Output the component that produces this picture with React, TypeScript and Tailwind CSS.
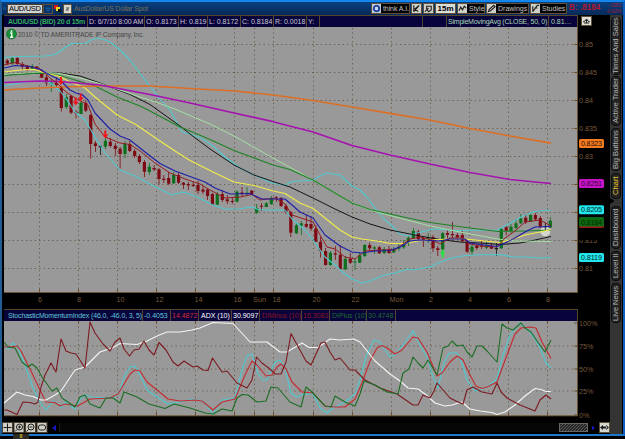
import clsx from "clsx";

type Candle = [x: number, high: number, low: number, top: number, bottom: number, color: "r" | "g" | "k"];

const CANDLE_COLORS = { r: "#7d0a12", g: "#0d6e1c", k: "#151515" };

const candles: Candle[] = [
  [7.3, 59, 65, 60.5, 63.5, "r"],
  [12.3, 57, 65, 58, 63.3, "g"],
  [17.3, 57, 65, 58, 64, "r"],
  [22.3, 62, 70, 64, 66.5, "r"],
  [27.3, 65, 71, 66, 69, "r"],
  [32.2, 64, 69, 66, 68.5, "g"],
  [36.8, 66, 70, 66.5, 69, "r"],
  [41.7, 69, 78, 70.7, 77.7, "r"],
  [46.4, 75, 86, 77.3, 83.3, "r"],
  [51.3, 79, 92, 82.8, 84, "g"],
  [56.3, 77, 87, 82.7, 85, "r"],
  [61.3, 86, 111.5, 87, 108, "r"],
  [66.3, 94, 109, 97, 107, "g"],
  [71.1, 95, 114, 96, 112.7, "r"],
  [76, 110, 118.5, 111.7, 113.3, "r"],
  [81, 102, 114, 102.7, 114, "g"],
  [85.8, 100, 112, 102.7, 110.7, "r"],
  [90.7, 114, 158.5, 115, 144, "r"],
  [95.4, 141, 152, 143.3, 146, "r"],
  [100.4, 145, 155, 145.7, 147.3, "k"],
  [105.4, 138, 149, 140.7, 146.7, "g"],
  [110.3, 138, 147.5, 141.7, 146, "r"],
  [115.3, 143, 156, 145.7, 149, "r"],
  [120.1, 147, 168.5, 148.7, 154, "r"],
  [125, 141, 158, 144, 154, "g"],
  [129.8, 141, 152, 144, 151, "r"],
  [134.7, 149, 158, 151, 156, "r"],
  [139.4, 154, 164, 156, 162, "r"],
  [144.4, 160, 177, 162, 171.7, "r"],
  [149.3, 163, 175, 166.7, 172, "g"],
  [154.1, 165, 171, 168, 169.5, "r"],
  [159, 168, 184.5, 169.3, 179, "r"],
  [163.8, 175, 183, 178.7, 180, "r"],
  [168.7, 172, 185, 178, 183.7, "r"],
  [173.7, 172, 184, 175, 183.3, "g"],
  [178.6, 173, 184, 175, 182.7, "r"],
  [183.4, 182, 189, 182.7, 184.7, "r"],
  [188.3, 182, 190, 184, 185.3, "r"],
  [193.2, 182, 187, 184.7, 186, "r"],
  [198, 181, 194, 185, 191, "r"],
  [203, 186, 194, 189.5, 191.7, "r"],
  [207.6, 188, 200, 189.5, 196, "r"],
  [212.4, 193, 205, 194, 204.7, "r"],
  [217.3, 192, 205, 194, 204.7, "g"],
  [222.3, 190, 202, 194, 200, "r"],
  [227.3, 195, 204, 199.3, 201.3, "r"],
  [232.3, 197, 204, 201, 202, "r"],
  [237, 190, 202.5, 191.7, 201.7, "g"],
  [242, 187, 196, 192.5, 194, "r"],
  [247, 187, 196, 192.7, 194, "g"],
  [251.7, 190, 195, 190.7, 194, "r"],
  [256.7, 204, 214, 208, 212.7, "g"],
  [261.4, 203, 211, 205.7, 206.7, "r"],
  [266.3, 202, 207, 203.3, 207, "g"],
  [271.3, 196, 205, 198, 204, "g"],
  [276.3, 196, 202, 197.3, 198.3, "r"],
  [281.1, 197, 207, 198, 206, "r"],
  [286, 204, 214, 206, 211.7, "r"],
  [290.8, 211, 237, 212, 232.7, "r"],
  [296.4, 223, 234, 225.3, 233.3, "g"],
  [301.3, 221, 235, 223.3, 225.7, "g"],
  [306.3, 215, 228, 224, 226.7, "r"],
  [311, 216, 231, 224, 228.7, "r"],
  [315.8, 225, 242, 228.7, 241.7, "r"],
  [320.5, 237, 257.5, 241.7, 251, "r"],
  [325.6, 248, 265.5, 251, 265, "r"],
  [330.4, 251, 266, 252.7, 265, "g"],
  [335.3, 246, 260, 253.3, 254.7, "r"],
  [340.3, 245, 270, 254.7, 269.3, "r"],
  [345.3, 256, 270, 258.7, 269.3, "g"],
  [350.3, 253, 264, 258.7, 262.7, "r"],
  [355, 258, 270, 261.5, 262.5, "g"],
  [359.7, 252, 263, 255.3, 262.7, "g"],
  [364.7, 244, 257, 245, 256, "g"],
  [369.7, 242.5, 251, 245, 248.3, "r"],
  [374.4, 246, 254, 247.3, 248.7, "g"],
  [379.3, 246, 254, 247.3, 253.3, "r"],
  [384.2, 247, 254, 249, 253, "g"],
  [389, 246, 254, 249, 253, "r"],
  [393.8, 247, 253, 249, 252.5, "g"],
  [398.8, 244, 251, 246.7, 248.7, "g"],
  [403.7, 240, 249, 243.3, 247.3, "g"],
  [408.4, 236, 246, 237.7, 243.3, "g"],
  [413.4, 228, 239, 231, 238.3, "g"],
  [418.3, 230, 241, 231.7, 239, "r"],
  [423.3, 237, 247, 238, 240, "r"],
  [428.2, 233, 243, 237.3, 238.7, "g"],
  [433, 235, 252, 237, 248.3, "r"],
  [437.8, 246, 256, 248.3, 250, "r"],
  [442.7, 232, 252, 233.3, 249.3, "g"],
  [447.5, 230, 240, 233, 234.7, "r"],
  [452.4, 222, 241, 234, 235.3, "r"],
  [457.3, 233, 240, 235, 237.3, "r"],
  [462.3, 231, 243, 235, 241, "r"],
  [467.1, 240, 253, 241.7, 251.7, "r"],
  [472, 245, 255, 246.7, 251.7, "g"],
  [476.8, 244, 250, 246, 248, "r"],
  [481.7, 240, 249, 245.3, 246.7, "r"],
  [486.6, 241, 249, 245, 247.7, "g"],
  [491.4, 243, 249, 246, 248.7, "r"],
  [496.4, 243, 256, 248, 249.3, "k"],
  [501.3, 228, 249, 229, 248.3, "g"],
  [506.2, 226, 235, 227.3, 230.7, "r"],
  [511, 224, 233, 226.7, 231, "g"],
  [516, 219, 229, 223.3, 228, "g"],
  [520.8, 214, 224, 218.3, 223.3, "g"],
  [525.7, 214, 224, 217.7, 222.3, "r"],
  [530.6, 214, 222, 215, 221.7, "g"],
  [535.4, 213, 221, 215, 219.3, "r"],
  [540.3, 216, 228, 218, 226.7, "r"],
  [545.3, 223, 231, 226, 227.3, "k"],
  [550.3, 217, 228, 220.7, 227.3, "g"],
];

const priceLines = [
  {
    color: "#4fc9cf",
    width: 1.1,
    points:
      "4,57.5 10,56.8 45,56 55,54.5 62,50 65,47.5 72,43.5 86,43.2 91,40 97,38 104,39.5 110,42 118,48 130,60 145,80 160,99 170,110 182,132 190,134 201,138 213,146 225,157 240,168 254,175 273,183.5 285,185 292,181.5 313,180 320,176 327,173 340,175 352,186 360,190 366,196 375,208 383,218 390,224 400,234 408,236 417,233 433,229 457,230.5 497,230 503,227 513,221.5 523,216 533,212 542,210.5 551,210.3",
  },
  {
    color: "#4fc9cf",
    width: 1.1,
    points:
      "4,85.5 15,84 25,82 40,81 50,82.5 60,91 67,100 75,112 85,120 95,137 105,153 113,162 120,170 135,176 150,184 162,190 172,195 183,192 195,196 213,205 225,209 240,208.7 252,207 258,209.5 268,210 285,210 292,219 305,230 313,240 325,257 335,265 345,274 352,279 362,283 370,281 383,275.5 395,273 408,269 413,270 430,267 440,262 452,258 465,255.5 480,254.7 500,254.5 512,257 525,257 540,258 551,257.5",
  },
  {
    color: "#151515",
    width: 1,
    points:
      "4,75 30,73.5 60,73 80,76 100,83 130,94.5 150,104.5 180,126 190,134 210,149 234,165 254,175 273,181.5 290,187 313,198 335,209 352,217 370,224 390,230 400,232 420,236 440,239.5 460,242 480,243 500,244.5 520,243 535,240 551,236.5",
  },
  {
    color: "#a3e0a3",
    width: 1,
    points:
      "4,74.5 40,72.5 60,73.5 80,78 98,83 117,89 140,97 157,102.5 175,109 190,115.5 210,124 234,136 273,158 313,180 335,193 352,203 370,210 390,215.5 430,226 470,234 498,239 515,241 551,241.5",
  },
  {
    color: "#1d8424",
    width: 1.1,
    points:
      "4,75.5 40,73 60,75.5 75,80 95,86 117,97 140,106 150,111 180,127 190,131 210,139.5 234,150.5 273,165 290,169.5 313,180 335,193 352,203 370,209.5 390,214 410,218.5 430,222.5 470,228 498,231.5 525,231 551,230",
  },
  {
    color: "#f2ec4a",
    width: 1.1,
    points:
      "4,72 20,70 35,69.5 45,73 60,76.5 70,82 85,88 95,97 117,115 135,124 157,139 175,151 190,160.5 213,172 234,182 254,185.5 273,191 285,193.5 300,203 313,208.5 330,222 340,230 352,237 362,239 380,241.5 390,243.5 405,243.5 420,240.5 440,239.5 460,238.5 480,240.5 500,242.5 510,240 525,235 540,232 551,229.5",
  },
  {
    color: "#dd6f25",
    width: 1.7,
    points:
      "4,90 30,88.5 60,87 100,86 150,86 190,88.5 235,91 273,95 313,100.5 352,107 390,113.3 430,120 470,128.5 510,136 551,143.2",
  },
  {
    color: "#a612b0",
    width: 1.7,
    points:
      "4,82.5 40,81 60,81.5 100,85 150,94.5 190,103 234,113 273,121.7 313,132 352,145.5 390,155 430,164 470,172.5 510,179.5 535,182 551,183.5",
  },
  {
    color: "#951d22",
    width: 1,
    points:
      "4,65 15,62.5 30,66.5 40,69 50,78 58,84 66,92 75,98 88,105 95,124 105,137 120,143 130,144.5 140,151 155,163 170,173 185,179 200,184 210,190 225,198 240,197 252,194.5 260,200 275,198 285,204 292,215 313,222 320,235 327,247 335,249 345,257 355,259 365,251 380,250 395,250 410,239 420,237 432,240 440,244 450,238 462,238 470,244 480,246 497,247 505,238 515,231 525,222 540,220 551,226",
  },
  {
    color: "#1e1ea8",
    width: 1.1,
    points:
      "4,68 15,65.5 30,66.5 40,69.5 50,75 60,80 70,90 76,93 82,94.5 88,100 95,113 110,129 120,136 130,140 145,152 160,163.5 175,171 190,176.5 205,182 215,188 230,194 250,193.5 262,199 285,199 292,205 300,212 313,218 325,235 340,246 352,252 362,253 375,251 390,250.5 400,247 410,241 420,240 440,241 450,239 465,239 470,243 480,244.5 497,246.5 505,243 515,238 525,232 535,227 551,226.5",
  },
];

const studyLines = [
  {
    color: "#4fc9cf",
    points:
      "4,347 9,349 13,343 18,348 25,365 33,388 40,402 46,410 53,401 57,403 61,408 65,402 75,409 80,399 85,395 92,397 108,398 115,397 120,390 125,375 130,367 135,366 140,375 147,390 160,399 168,404 180,402 192,399 203,401 213,414 222,400 235,398 242,370 247,356 252,354 258,374 263,380 267,380 275,362 280,360 285,368 291,393 297,397 304,394 313,394 320,408 327,413 333,408 345,402 355,394 360,380 366,356 374,340 380,342 385,350 390,357 395,355 405,342 413,331 420,345 428,359 433,377 438,388 444,363 449,353 457,353 462,363 467,380 475,391 480,390 487,387 497,379 503,355 510,335 520,323 528,330 535,339 541,350 546,363 551,368",
  },
  {
    color: "#c42a30",
    points:
      "4,347 10,347 17,346 21,351 31,371 41,392 46,402 55,402.5 60,406 65,404 77,406 83,403 90,399 110,398 118,394 124,384 130,374 135,370 140,371 147,382 157,390 168,399 180,401 195,400 202,401 213,410 222,402 235,399 245,375 252,361 257,365 266,376 272,375 277,367 281,364 286,369 292,382 302,392 313,393 325,406 335,407 345,407 355,399 362,383 370,361 377,348 382,345.5 387,348 395,354 402,350 413,337 418,338 427,352 437,376 442,373 450,362 457,356 463,360 470,375 476,386 482,388.5 487,387 497,382 507,355 515,334 521,328 530,327 536,328 542,342 551,358.5",
  },
  {
    color: "#f4f4f4",
    points:
      "4,403 17,392 25,395 33,396.5 41,400 46,400 55,395 61,391 75,370 85,367 92,360 100,352 112,348 120,343.5 137,344.5 147,341 157,336 167,332 180,332 192,330 200,328 213,322.5 233,323.5 250,342 267,342 280,352 287,352 302,343 309,347.5 318,347.5 330,339 340,340 354,339 360,342 375,361 390,374 400,381 408,388 418,389 425,394 435,403 445,406 452,405 462,402 470,409 480,411 492,412.5 497,414.5 505,412 515,405 525,396 535,388.5 541,389.5 546,391.5 551,391.5",
  },
  {
    color: "#7d1a20",
    points:
      "4,410 7,410 17,414.5 23,402 30,402.5 35,404 38,402 41,387 45,375 51,363 56,372 61,339 66,351 71,353 76,354 85,368 90,322 95,333 103,344 110,351 115,342 120,338 124,349 129.5,356 134,350 139,349 144,341 149,350 154,355 159,342.5 166,350 173,362 178,366 184,361 193,367 197,366 203,370 208,370.5 212.5,358 222,372 227,371 237,383 247,388 252,380 256.5,357 262,363 270,369 275,374 281,374 286,362 291,333.5 295,341 306,361 311,365 321,343 325,342 330,352 335,360 340,358 350,370 355,370 365,380 380,388 397,394 413,405 418,405 423,395 430,398 434,391 437,383 450,398 456,401 463,404 467,390 473,387 482,392 492,394 497,383 501,392 507,398 520,405 535,411 540,400 546,395 551,399",
  },
  {
    color: "#1b6e24",
    points:
      "4,342 8,347 15,348 22,362 28,367 32,364 37,368 42,377 52,391 57,388 62,398 75,407 80,397 85,395 90,404 100,408 106,398 113,398 120,403 124,392 137,397 149,404 165,408.5 174,404 190,408 205,413 213,414 222,409 232,411 237,398 242,394.5 248,395 257,402 266,401 271,387 278,388 290,402 301,407 306,387 311,391 325,406 331,407 335,396 345,402 355,406 360,394 364,381 375,385 387,392 398,394 403,373 409,369 413,357 418,363 423,368 428,360 437,375 443,348 448,346 452,341 457,346 463,345 467,352 472,357 477,346 482,346 487,351 497,362 502,324 507,328 513,330 521,323 525,328 531,332 537,341 545,352 551,340",
  },
];

const timeTicks = [
  { x: 39.5, label: "6" },
  { x: 78.5, label: "8" },
  { x: 117.5, label: "10" },
  { x: 156.5, label: "12" },
  { x: 195.5, label: "14" },
  { x: 234.5, label: "16" },
  { x: 254.5, label: "Sun" },
  { x: 273.5, label: "18" },
  { x: 313.5, label: "20" },
  { x: 352.5, label: "22" },
  { x: 391.5, label: "Mon" },
  { x: 430.5, label: "2" },
  { x: 469.5, label: "4" },
  { x: 508.5, label: "6" },
  { x: 547.5, label: "8" },
];

const priceTicks = [
  { y: 44.5, label: "0.85" },
  { y: 72.5, label: "0.845" },
  { y: 100.5, label: "0.84" },
  { y: 128.5, label: "0.835" },
  { y: 156.5, label: "0.83" },
  { y: 184.5, label: "" },
  { y: 212.5, label: "" },
  { y: 240.5, label: "0.815" },
  { y: 268.5, label: "0.81" },
];

const priceTags = [
  { y: 143.5, label: "0.8323", fill: "#f47b20", text: "#2a1000" },
  { y: 183.5, label: "0.8251", fill: "#c814c8", text: "#3a003a" },
  { y: 209.8, label: "0.8205", fill: "#22e6ea", text: "#00282c" },
  { y: 257.5, label: "0.8119", fill: "#22e6ea", text: "#00282c" },
];

const percentTicks = [
  { y: 323.5, label: "100%" },
  { y: 346.5, label: "75%" },
  { y: 369.5, label: "50%" },
  { y: 391.5, label: "25%" },
  { y: 415.5, label: "0%" },
];

const quoteCells = [
  { text: "AUD/USD (BID) 20 d 15m", className: "w-[84px] pl-1 font-bold text-[#2fae5c] tracking-[-0.25px]" },
  { text: "D: 6/7/10 8:00 AM", className: "w-[57px] pl-px tracking-[-0.1px]" },
  { text: "O: 0.8173", className: "w-[34px] pl-px" },
  { text: "H: 0.819", className: "w-[29px] pl-px" },
  { text: "L: 0.8172", className: "w-[33px] pl-px" },
  { text: "C: 0.8184", className: "w-[33px] pl-px" },
  { text: "R: 0.0018", className: "w-[33px] pl-px" },
  { text: "Y:", className: "w-[13px] pl-px" },
  { text: "", className: "w-[103px]" },
  { text: "", className: "w-[24px]" },
  { text: "SimpleMovingAvg (CLOSE, 50, 0)", className: "w-[102px] pl-px text-[#a9d8b4] tracking-[-0.22px]" },
  { text: "0.81…", className: "w-[28px] pl-0.5 text-[#a9d8b4]" },
];

const studyCells = [
  { text: "StochasticMomentumIndex (46.0, -46.0, 3, 5)", className: "w-[139px] pl-1 text-[#62c8dc] tracking-[-0.14px]" },
  { text: "-0.4053", className: "w-[28px] pl-px text-[#62c8dc]" },
  { text: "14.4872", className: "w-[28px] pl-px text-[#d02a30]" },
  { text: "ADX (10)", className: "w-[33px] pl-0.5 text-white" },
  { text: "30.9097", className: "w-[28px] pl-px text-white" },
  { text: "DIMinus (10)", className: "w-[42px] pl-0.5 text-[#8a1426] tracking-[-0.1px]" },
  { text: "16.3083", className: "w-[28px] pl-px text-[#8a1426]" },
  { text: "DIPlus (10)", className: "w-[37px] pl-0.5 text-[#1d6b30]" },
  { text: "30.4748", className: "w-[29px] pl-px text-[#1d6b30]" },
];

const sideTabs = [
  { label: "Times And Sales", className: "h-[58px]" },
  { label: "Active Trader", className: "mt-px h-[50px]" },
  { label: "Big Buttons", className: "mt-0.5 h-[43px]" },
  { label: "Chart", className: "mt-0.5 h-[26px] text-[#e6c92c]" },
  { label: "Dashboard", className: "mt-[7px] h-[43px]" },
  { label: "Level II", className: "mt-[2px] h-[30px]" },
  { label: "Live News", className: "mt-[2px] h-[40px]" },
];

function Line({ color, points, width = 1.1 }: { color: string; points: string; width?: number }) {
  return <polyline points={points} fill="none" stroke={color} strokeWidth={width} strokeLinejoin="round" />;
}

function AxisText({ x, y, label, anchor = "start" }: { x: number; y: number; label: string; anchor?: "start" | "middle" }) {
  return (
    <text x={x} y={y} textAnchor={anchor} fill="#77583c" fontSize="7.2">
      {label}
    </text>
  );
}

function Arrow({ x, y, up = false }: { x: number; y: number; up?: boolean }) {
  const d = up ? "M0 -4 L2.5 0 H1 V4 H-1 V0 H-2.5 Z" : "M0 4 L3 0 H1 V-4 H-1 V0 H-3 Z";
  return <path d={d} transform={`translate(${x} ${y})`} fill={up ? "#22e83a" : "#f4141c"} />;
}

function PriceChart() {
  return (
    <svg viewBox="4 27 606 282" className="block h-[282px] w-[606px] shrink-0">
      <rect x="4" y="27" width="574" height="266" fill="#999999" />
      <g stroke="#685c48" strokeWidth="1" strokeDasharray="1.2 3.2">
        {priceTicks.map(({ y }) => (
          <line key={y} x1="4" x2="577" y1={y} y2={y} />
        ))}
        {timeTicks.map(({ x }) => (
          <line key={x} x1={x} x2={x} y1="28" y2="293" />
        ))}
      </g>
      <g stroke="#6b5030">
        <path d="M577.5 27 V293 M4 292.5 H578" />
        {priceTicks.map(({ y }) => (
          <line key={y} x1="574" x2="577" y1={y} y2={y} />
        ))}
        {timeTicks.map(({ x }) => (
          <line key={x} x1={x} x2={x} y1="289" y2="293" />
        ))}
      </g>

      <circle cx="545.3" cy="231.5" r="5" fill="#d4d4cc" />
      {candles.map(([x, high, low, top, bottom, color]) => (
        <g key={x} fill={CANDLE_COLORS[color]}>
          <rect x={x - 0.4} y={high} width="0.8" height={low - high} />
          <rect x={x - 1.6} y={top} width="3.2" height={bottom - top} />
        </g>
      ))}
      {priceLines.map((line, i) => (
        <Line key={i} {...line} />
      ))}
      <Arrow x={61} y={81} />
      <Arrow x={75.7} y={101.5} />
      <Arrow x={80.7} y={97.5} />
      <Arrow x={105.3} y={134.5} />
      <Arrow x={442.7} y={253.5} up />

      {/* copyright badge */}
      <circle cx="11.5" cy="34" r="5" fill="#16913a" stroke="#0b5a20" strokeWidth="0.6" />
      <path d="M11.5 30.3 v1.6 M10.2 33 h1.5 v4 M10 37.2 h3.2" stroke="#f2fff2" strokeWidth="1.4" fill="none" />
      <text x="18" y="36.8" fontSize="6.8" fill="#484848" textLength="126">
        2010 © TD AMERITRADE IP Company, Inc.
      </text>

      {timeTicks.map(({ x, label }) => (
        <AxisText key={x} x={x + (label.length === 3 ? 5 : label.length === 2 ? 3 : 0.5)} y={302} label={label} anchor="middle" />
      ))}
      {priceTicks.map(({ y, label }) => (
        <AxisText key={y} x={579} y={y + 2.7} label={label} />
      ))}
      {priceTags.map(({ y, label, fill, text }) => (
        <g key={label}>
          <rect x="579" y={y - 4.5} width="25" height="9" rx="1.5" fill={fill} />
          <text x="581" y={y + 2.6} fontSize="7.2" fill={text} textLength="21">
            {label}
          </text>
        </g>
      ))}
      <rect x="579" y="220" width="25" height="8" rx="1.5" fill="#a01818" />
      <rect x="579" y="217" width="25" height="9.6" rx="1.5" fill="#0c6a10" />
      <text x="581" y="224.5" fontSize="7.2" fill="#022c04" textLength="21">
        0.8184
      </text>
      <rect x="579" y="236" width="30" height="4" fill="#000" />
    </svg>
  );
}

function StudyChart() {
  return (
    <svg viewBox="4 321 606 98" className="block h-[98px] w-[606px] shrink-0 overflow-visible">
      <rect x="4" y="321" width="574" height="95" fill="#999999" />
      <g stroke="#685c48" strokeDasharray="1.2 3.2">
        {percentTicks.slice(1, 4).map(({ y }) => (
          <line key={y} x1="4" x2="577" y1={y - 0.5} y2={y - 0.5} />
        ))}
        {timeTicks.map(({ x }) => (
          <line key={x} x1={x} x2={x} y1="322" y2="415" />
        ))}
      </g>
      <g stroke="#6b5030">
        <path d="M577.5 321 V416 M4 415.8 H578" />
        {percentTicks.map(({ y }) => (
          <line key={y} x1="574" x2="577" y1={y - 0.5} y2={y - 0.5} />
        ))}
        {timeTicks.map(({ x }) => (
          <path key={x} d={`M${x} 321 v3 M${x} 412 v4`} />
        ))}
      </g>
      {studyLines.map((line) => (
        <Line key={line.color} {...line} />
      ))}
      {percentTicks.map(({ y, label }) => (
        <AxisText key={y} x={579} y={y + 2.5} label={label} />
      ))}
    </svg>
  );
}

function HeaderStrip({ cells }: { cells: { text: string; className: string }[] }) {
  return (
    <div className="flex h-3 w-[574px] shrink-0 border-t border-r border-[#54452f] bg-[#08033a] text-[7px] leading-[11px] whitespace-nowrap text-[#c9c9d4]">
      {cells.map(({ text, className }, i) => (
        <div key={i} className={clsx("shrink-0 border-r border-[#54452f]", i === 11 && "border-r-0", className)}>
          {text}
        </div>
      ))}
    </div>
  );
}

function ToolButton({ label, className, children }: { label?: string; className?: string; children?: React.ReactNode }) {
  return (
    <div className={clsx("flex h-[11px] shrink-0 items-center border border-[#5d513c] bg-black text-[7px] leading-none whitespace-nowrap text-[#c4c4c4]", className)}>
      {children && (
        <svg viewBox="0 0 10 9" className="h-[9px] w-[9px] shrink-0 bg-[#cfcfc8]" fill="none" stroke="#1c1c1c" strokeWidth="1.2">
          {children}
        </svg>
      )}
      {label && <span className="pl-0.5">{label}</span>}
    </div>
  );
}

function TitleBar() {
  return (
    <div className="flex h-[13px] shrink-0 items-center bg-linear-to-b from-[#083f7e] to-[#062a58]">
      <div className="ml-px h-[3px] w-[3px] shrink-0 rounded-full border border-[#1f5fa0]" />
      <div className="ml-px h-[10px] w-[36px] shrink-0 border border-[#4a4030] bg-[#d2d2d2] pl-px text-[7.5px] leading-[8px] tracking-[-0.3px] text-black">
        AUD/USD
      </div>
      <svg viewBox="0 0 9 10" className="h-[10px] w-[10px] shrink-0 border border-[#5d513c] bg-[#073468]" fill="none" stroke="#2e74b8">
        <path d="M1.5 4 h6 M2.5 5.5 l2 2 l2 -2" />
      </svg>
      <svg viewBox="0 0 8 10" className="ml-px h-[10px] w-[8px] shrink-0">
        <rect x="0" y="1" width="4" height="4" fill="#d81818" />
        <rect x="2" y="3" width="4" height="4" fill="#f0d820" />
        <rect x="4" y="5" width="3" height="3" fill="#111" />
      </svg>
      <svg viewBox="0 0 10 10" className="ml-px h-[10px] w-[9px] shrink-0 border border-[#5d513c] bg-[#d8d8d0]" fill="none" stroke="#222">
        <path d="M3 7 l4 -4 M3 3.5 h4 M3 6.5 h4" />
      </svg>
      <span className="ml-[2px] w-[297px] shrink-0 text-[7px] leading-none tracking-[-0.2px] whitespace-nowrap text-[#77715a]">
        AusDollar/US Dollar Spot
      </span>

      <div className="flex shrink-0 gap-px">
        <ToolButton label="think A.I." className="w-[39px] tracking-[-0.1px]">
          <rect width="10" height="9" fill="#b8c4dc" stroke="none" />
          <circle cx="5" cy="4.5" r="3" fill="#c4d4f4" stroke="#10308c" strokeWidth="1.8" />
        </ToolButton>
        <ToolButton className="w-[11px]">
          <path d="M2 1 v7 M8 1 l-5 4 l4 3 M2 8 l6 -7" />
        </ToolButton>
        <ToolButton className="w-[11px]">
          <path d="M1 8 l4 -4 M3 2 h5 v4 l-3 2 l-2 -3 z" />
        </ToolButton>
        <div className="h-[11px] w-[21px] border border-[#5d513c] bg-[#dcdcd6] text-center text-[8px] leading-[9px] font-bold text-black">15m</div>
        <ToolButton label="Style" className="w-[28px]">
          <path d="M1 7 l2 -4 l2 3 l2 -4 l2 2" />
        </ToolButton>
        <ToolButton label="Drawings" className="w-[43px]">
          <path d="M1.5 8 l1 -2.5 l5 -4.5 l1.5 1.5 l-5 4.5 z" />
        </ToolButton>
        <ToolButton label="Studies" className="w-[37px]">
          <path d="M2 8 l5 -7 M2 2 v6 M4 4 h3 M7 1 h2" />
        </ToolButton>
      </div>
      <span className="ml-[2px] w-[35px] shrink-0 text-[8.2px] leading-none font-bold whitespace-nowrap text-[#b01830]">B: .8184</span>
      <div className="w-[17px] shrink-0 text-right text-[5px] leading-[5.5px] tracking-[-0.2px] whitespace-nowrap text-[#a81c38]">
        <div>-.0051</div>
        <div>-0.62%</div>
      </div>
    </div>
  );
}

function SideBar() {
  return (
    <div className="relative flex w-[12px] shrink-0 flex-col items-center bg-[#343434] pt-[2px]">
      {sideTabs.map(({ label, className }) => (
        <div
          key={label}
          className={clsx(
            "flex w-[10px] shrink-0 rotate-180 items-center justify-center rounded-[4px] border border-[#0c0c0c] bg-[#232323] text-[7.6px] leading-none whitespace-nowrap [writing-mode:vertical-rl]",
            label !== "Chart" && "text-[#b4b4b4]",
            className
          )}
        >
          {label}
        </div>
      ))}
      <svg viewBox="0 0 5 6" className="absolute top-[183px] left-0 h-[6px] w-[5px]">
        <path d="M0 0 L4.5 3 L0 6 Z" fill="#000" />
      </svg>
    </div>
  );
}

function ScrollRow() {
  return (
    <div className="mt-[3px] flex h-[11px] w-[606px] shrink-0 items-center">
      <svg viewBox="0 0 46 11" className="-ml-[2px] h-[11px] w-[46px] shrink-0" fill="none" stroke="#1a1a1a">
        {[0, 11.5, 23, 34.5].map((x) => (
          <rect key={x} x={x + 0.5} y="0.5" width="10" height="10" fill="#cfcfc6" stroke="#4a4030" />
        ))}
        <path d="M5.5 1.5 v8 M1.5 5.5 h8" />
        <circle cx="17.5" cy="5" r="3" />
        <path d="M16 5 h3 M17.5 3.5 v3 M15 7.5 l-2 2" />
        <circle cx="29" cy="5" r="3" />
        <path d="M27.5 5 h3 M26.5 7.5 l-2 2" />
        <rect x="36.5" y="3" width="7" height="5" rx="2" />
      </svg>
      <svg viewBox="0 0 4 6" className="ml-[4px] h-[6px] w-[4px] shrink-0">
        <path d="M4 0 L0 3 L4 6 Z" fill="#1414c8" />
      </svg>
      <div className="ml-[3px] flex h-[9px] w-[529px] shrink-0 justify-end border-l border-[#1c1c1c] bg-[#060606]">
        <svg className="h-[9px] w-[29px] border border-[#666] bg-[#262626]">
          <defs>
            <pattern id="grip" width="3" height="3" patternUnits="userSpaceOnUse">
              <path d="M0 3 L3 0" stroke="#666" strokeWidth="0.8" />
            </pattern>
          </defs>
          <rect width="29" height="9" fill="url(#grip)" />
        </svg>
      </div>
      <svg viewBox="0 0 4 6" className="ml-[4px] h-[6px] w-[3px] shrink-0">
        <path d="M0 0 L4 3 L0 6 Z" fill="#1414c8" />
      </svg>
      <svg viewBox="0 0 11 11" className="ml-[4px] h-[11px] w-[11px] shrink-0">
        <rect x="0.5" y="0.5" width="10" height="10" fill="#d6d6ce" stroke="#5d513c" />
        <path d="M1 5.5 L4 3 V8 Z M10 5.5 L7 3 V8 Z M3 4.5 h5 v2 h-5 z" fill="#1a1a1a" />
      </svg>
    </div>
  );
}

export default function App() {
  return (
    <div className="flex h-[439px] w-[625px] flex-col overflow-hidden bg-black font-['Liberation_Sans',Arial,sans-serif]">
      <div className="flex h-[436px] shrink-0 flex-col border-t-2 border-r-2 border-b-2 border-l-2 border-t-[#1487ee] border-r-[#0f5fc0] border-b-[#1b78cc] border-l-[#215c94]">
        <TitleBar />
        <div className="flex min-h-0 flex-1">
          <div className="flex w-[608px] shrink-0 flex-col pl-[2px]">
            <div className="flex">
              <HeaderStrip cells={quoteCells} />
              <svg viewBox="0 0 11 10" className="ml-[3px] mt-px h-[10px] w-[11px]">
                <rect x="0.5" y="0.5" width="10" height="9" fill="#deded8" stroke="#5d513c" />
                <path d="M2 6 l2 -1 l1.5 -2 l1.5 2 l2 1 M5.5 3 v4 M3 7 h5" fill="none" stroke="#222" />
              </svg>
            </div>
            <PriceChart />
            <HeaderStrip cells={studyCells} />
            <StudyChart />
            <ScrollRow />
          </div>
          <SideBar />
        </div>
      </div>
      {/* window tab peeking in from below */}
      <div className="relative -mt-[2px] ml-[13px] h-[5px] w-[16px] bg-[#2a2a24] text-center text-[5.5px] leading-[5px] font-bold text-[#c8a820]">8</div>
    </div>
  );
}
